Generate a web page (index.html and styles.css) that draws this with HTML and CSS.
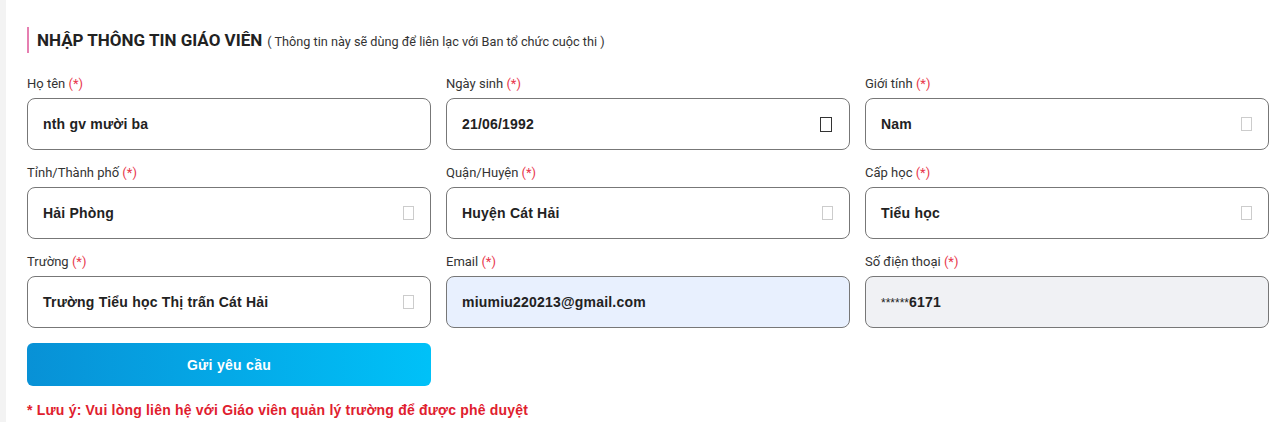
FILE: index.html
```html
<!DOCTYPE html>
<html lang="vi">
<head>
<meta charset="utf-8">
<title>Nhập thông tin giáo viên</title>
<link rel="stylesheet" href="styles.css">
</head>
<body>
<div class="card">
  <div class="heading">
    <span class="title">NHẬP THÔNG TIN GIÁO VIÊN</span>
    <span class="subtitle">( Thông tin này sẽ dùng để liên lạc với Ban tổ chức cuộc thi )</span>
  </div>
  <div class="form">
    <div class="field">
      <div class="label">Họ tên <span class="req">(*)</span></div>
      <div class="input"><span class="value">nth gv mười ba</span></div>
    </div>
    <div class="field">
      <div class="label">Ngày sinh <span class="req">(*)</span></div>
      <div class="input"><span class="value">21/06/1992</span><span class="box dark"></span></div>
    </div>
    <div class="field">
      <div class="label">Giới tính <span class="req">(*)</span></div>
      <div class="input"><span class="value">Nam</span><span class="box"></span></div>
    </div>
    <div class="field">
      <div class="label">Tỉnh/Thành phố <span class="req">(*)</span></div>
      <div class="input"><span class="value">Hải Phòng</span><span class="box"></span></div>
    </div>
    <div class="field">
      <div class="label">Quận/Huyện <span class="req">(*)</span></div>
      <div class="input"><span class="value">Huyện Cát Hải</span><span class="box"></span></div>
    </div>
    <div class="field">
      <div class="label">Cấp học <span class="req">(*)</span></div>
      <div class="input"><span class="value">Tiểu học</span><span class="box"></span></div>
    </div>
    <div class="field">
      <div class="label">Trường <span class="req">(*)</span></div>
      <div class="input"><span class="value">Trường Tiểu học Thị trấn Cát Hải</span><span class="box"></span></div>
    </div>
    <div class="field">
      <div class="label">Email <span class="req">(*)</span></div>
      <div class="input autofill"><span class="value">miumiu220213@gmail.com</span></div>
    </div>
    <div class="field">
      <div class="label">Số điện thoại <span class="req">(*)</span></div>
      <div class="input disabled"><span class="value"><span class="stars">******</span>6171</span></div>
    </div>
    <button class="submit" type="button">Gửi yêu cầu</button>
  </div>
  <p class="note">* Lưu ý: Vui lòng liên hệ với Giáo viên quản lý trường để được phê duyệt</p>
</div>
</body>
</html>
```

FILE: styles.css
```css
html, body {
  margin: 0;
  padding: 0;
}
body {
  background: #f3f3f3;
  font-family: Roboto, "Liberation Sans", Arial, sans-serif;
  color: #333;
}
.card {
  margin-left: 6px;
  background: #fff;
  min-height: 422px;
  padding: 27px 0 0 21px;
  box-sizing: border-box;
}
.heading {
  display: flex;
  align-items: center;
  height: 26px;
  border-left: 2px solid #e67fb1;
  padding-left: 8px;
  box-sizing: border-box;
  white-space: nowrap;
}
.title {
  font-family: Roboto, "Liberation Sans", sans-serif;
  font-weight: 700;
  font-size: 17px;
  color: #222;
}
.subtitle {
  font-size: 12.7px;
  color: #333;
  margin-left: 5px;
  margin-top: 2px;
}
.form {
  margin-top: 23px;
  display: grid;
  grid-template-columns: repeat(3, 404px);
  column-gap: 15px;
  row-gap: 15px;
}
.label {
  font-size: 13px;
  line-height: 16px;
  height: 16px;
  margin-bottom: 6px;
  color: #333;
}
.req {
  color: #e8374c;
}
.input {
  height: 52px;
  box-sizing: border-box;
  border: 1px solid #777;
  border-radius: 8px;
  background: #fff;
  display: flex;
  align-items: center;
  justify-content: space-between;
  padding: 0 16px 0 15px;
}
.input.autofill {
  background: #e8f0fe;
}
.input.disabled {
  background: #f0f1f4;
}
.value {
  font-family: "Liberation Sans", Arial, sans-serif;
  font-weight: 700;
  font-size: 14px;
  color: #222;
  letter-spacing: 0.2px;
}
.stars {
  font-weight: 400;
  font-size: 12px;
  letter-spacing: 0;
}
.box {
  width: 9px;
  height: 12px;
  border: 1px solid #ccc;
  flex: none;
}
.box.dark {
  border-color: #333;
  width: 10px;
  height: 13px;
  margin-right: 1px;
}
.submit {
  grid-column: 1;
  height: 43px;
  border: 0;
  border-radius: 6px;
  background: linear-gradient(90deg, #0891d6 0%, #00c1f8 100%);
  color: #fff;
  font-family: "Liberation Sans", Arial, sans-serif;
  font-weight: 700;
  font-size: 14px;
  letter-spacing: 0.3px;
  cursor: pointer;
}
.note {
  margin: 15px 0 0 0;
  font-family: "Liberation Sans", Arial, sans-serif;
  font-weight: 700;
  font-size: 14px;
  line-height: 18px;
  color: #e0202e;
  letter-spacing: 0.2px;
}
```
